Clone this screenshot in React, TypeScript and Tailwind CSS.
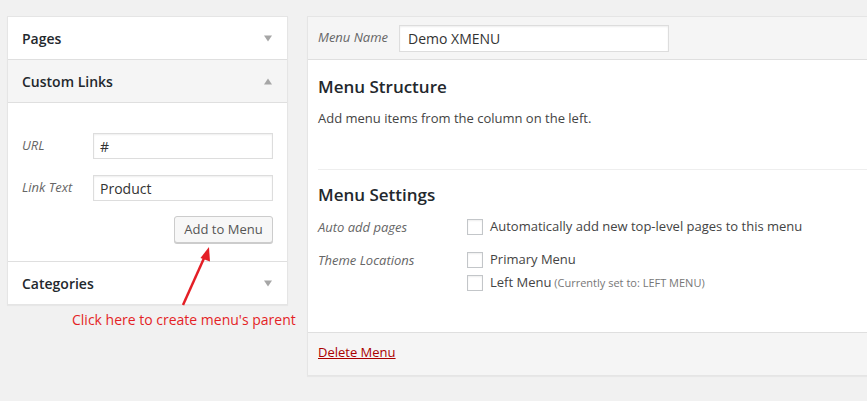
import React from "react";

const font = { fontFamily: '"Open Sans", "Liberation Sans", sans-serif' };

function Tri({ up }: { up?: boolean }) {
  return (
    <svg width="10" height="7" viewBox="0 0 10 7" className="mr-[14px]">
      {up ? <polygon points="1,6.5 9,6.5 5,0.5" fill="#a6a6a6" /> : <polygon points="1,0.5 9,0.5 5,6.5" fill="#a6a6a6" />}
    </svg>
  );
}

function Header({ title, up, gray }: { title: string; up?: boolean; gray?: boolean }) {
  return (
    <div className={`flex h-[42px] items-center justify-between pl-[14px] ${gray ? "bg-[#f5f5f5]" : "bg-white"}`}>
      <span className="text-[14px] font-semibold text-[#23282d]">{title}</span>
      <Tri up={up} />
    </div>
  );
}

function Check({ label, note }: { label: string; note?: string }) {
  return (
    <div className="flex h-[16px] items-center gap-[7px]">
      <span className="block h-[16px] w-[16px] border border-[#c3c6c9] bg-white shadow-[inset_0_1px_2px_rgba(0,0,0,0.07)]" />
      <span className="text-[13px] text-[#444]">
        {label}
        {note && <span className="text-[11px] text-[#777]"> {note}</span>}
      </span>
    </div>
  );
}

export default function App() {
  return (
    <div className="relative flex h-[401px] w-full overflow-hidden bg-[#f1f1f1] pl-[7px] pt-[16px]" style={font}>
      <div className="flex w-[281px] shrink-0 flex-col">
        <div className="border border-[#e5e5e5] bg-white shadow-[0_1px_1px_rgba(0,0,0,0.04)]">
          <Header title="Pages" />
          <div className="border-t border-[#dfdfdf]">
            <Header title="Custom Links" up gray />
          </div>
          <div className="border-t border-[#dfdfdf] pb-[18px] pl-[14px] pr-[14px] pt-[30px]">
            <div className="flex items-center">
              <span className="w-[71px] text-[13px] italic text-[#666]">URL</span>
              <div className="flex h-[26px] flex-1 items-center border border-[#ddd] bg-white pl-[6px] text-[14px] text-[#333] shadow-[inset_0_1px_2px_rgba(0,0,0,0.07)]">#</div>
            </div>
            <div className="mt-[16px] flex items-center">
              <span className="w-[71px] text-[13px] italic text-[#666]">Link Text</span>
              <div className="flex h-[26px] flex-1 items-center border border-[#ddd] bg-white pl-[6px] text-[14px] text-[#333] shadow-[inset_0_1px_2px_rgba(0,0,0,0.07)]">Product</div>
            </div>
            <div className="mt-[15px] flex justify-end">
              <button className="h-[27px] w-[99px] rounded-[3px] border border-[#ccc] bg-[#f7f7f7] text-[13px] text-[#555] shadow-[0_1px_0_#ccc]">Add to Menu</button>
            </div>
          </div>
          <div className="border-t border-[#dfdfdf]">
            <Header title="Categories" />
          </div>
        </div>
        <div className="mt-[4px] whitespace-nowrap pl-[65px] text-[14px] text-[#e41f26]">Click here to create menu's parent</div>
      </div>

      <div className="ml-[19px] flex h-[360px] w-[600px] shrink-0 flex-col border border-[#e5e5e5] bg-white shadow-[0_1px_1px_rgba(0,0,0,0.04)]">
        <div className="flex h-[42px] items-center bg-[#f5f5f5] pl-[10px]">
          <span className="w-[81px] text-[13px] italic text-[#666]">Menu Name</span>
          <div className="flex h-[27px] w-[270px] items-center border border-[#ddd] bg-white pl-[8px] text-[14px] text-[#333] shadow-[inset_0_1px_2px_rgba(0,0,0,0.07)]">Demo XMENU</div>
        </div>
        <div className="flex-1 border-t border-[#dfdfdf] px-[10px] pt-[15px]">
          <h3 className="text-[17px] leading-[24px] font-semibold text-[#23282d]">Menu Structure</h3>
          <p className="mt-[9px] text-[13px] leading-[20px] text-[#444]">Add menu items from the column on the left.</p>
          <div className="mt-[41px] border-t border-[#eee]" />
          <h3 className="mt-[13px] text-[17px] leading-[24px] font-semibold text-[#23282d]">Menu Settings</h3>
          <div className="mt-[12px] flex">
            <span className="w-[149px] text-[13px] italic leading-[16px] text-[#666]">Auto add pages</span>
            <Check label="Automatically add new top-level pages to this menu" />
          </div>
          <div className="mt-[17px] flex">
            <span className="w-[149px] text-[13px] italic leading-[16px] text-[#666]">Theme Locations</span>
            <div className="flex flex-col gap-[7px]">
              <Check label="Primary Menu" />
              <Check label="Left Menu" note="(Currently set to: LEFT MENU)" />
            </div>
          </div>
        </div>
        <div className="flex h-[43px] items-center border-t border-[#dfdfdf] bg-[#f5f5f5] pb-[3px] pl-[10px]">
          <a className="text-[13px] text-[#a00] underline">Delete Menu</a>
        </div>
      </div>

      <svg className="pointer-events-none absolute left-0 top-0" width="867" height="401">
        <line x1="183" y1="305" x2="205" y2="256" stroke="#e41f26" strokeWidth="2.5" />
        <polygon points="209,247 200.5,258 210,261.5" fill="#e41f26" />
      </svg>
    </div>
  );
}
